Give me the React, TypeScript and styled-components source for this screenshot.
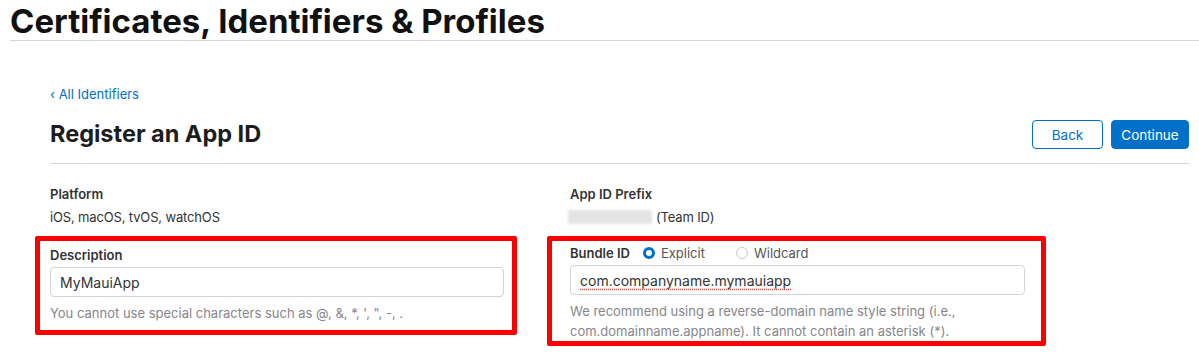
import React from 'react';
import styled, { createGlobalStyle } from 'styled-components';

const GlobalStyle = createGlobalStyle`
  body {
    margin: 0;
    background: #fff;
    font-family: Inter, "Noto Sans", "Liberation Sans", sans-serif;
    color: #1d1d1f;
  }
`;

const Page = styled.div`
  width: 1199px;
  height: 354px;
  overflow: hidden;
`;

const TopBar = styled.header`
  margin-left: 10px;
  padding-top: 2px;
  border-bottom: 1px solid #d6d6d6;
`;

const SiteTitle = styled.h1`
  margin: 0;
  font-size: 33px;
  line-height: 38px;
  font-weight: 700;
  color: #111;
`;

const Content = styled.main`
  padding: 44px 10px 0 50px;
`;

const BackLink = styled.a`
  display: block;
  font-size: 13px;
  line-height: 18px;
  color: #0070c9;
  text-decoration: none;
`;

const HeadRow = styled.div`
  display: flex;
  align-items: center;
  justify-content: space-between;
  margin-top: 15px;
  padding-bottom: 14px;
  border-bottom: 1px solid #d6d6d6;
`;

const PageTitle = styled.h2`
  margin: 0;
  font-size: 23.5px;
  line-height: 30px;
  font-weight: 700;
  color: #1d1d1f;
`;

const Actions = styled.div`
  display: flex;
  gap: 8px;
  margin-top: 2px;
`;

const Button = styled.button<{ $primary?: boolean }>`
  width: ${(p) => (p.$primary ? '78px' : '71px')};
  height: 29px;
  padding: 0;
  border-radius: 4px;
  font-family: inherit;
  font-size: 13.5px;
  border: 1px solid #0070c9;
  background: ${(p) => (p.$primary ? '#0070c9' : '#fff')};
  color: ${(p) => (p.$primary ? '#fff' : '#0070c9')};
`;

const Columns = styled.div`
  display: grid;
  grid-template-columns: 520px 1fr;
  margin-top: 21px;
`;

const Column = styled.section`
  display: flex;
  flex-direction: column;
`;

const Label = styled.div`
  font-size: 13px;
  line-height: 18px;
  font-weight: 600;
  color: #333;
  display: flex;
  align-items: center;
`;

const Value = styled.div`
  margin-top: 5px;
  font-size: 13px;
  line-height: 18px;
  letter-spacing: -0.15px;
  color: #333;
  display: flex;
  align-items: center;
`;

const Blurred = styled.span`
  display: inline-block;
  width: 84px;
  height: 14px;
  margin-left: -2px;
  margin-right: 4px;
  background: #e4e4e4;
  filter: blur(1.5px);
`;

const Highlight = styled.div<{ $width: number; $height: number; $inset: number }>`
  box-sizing: border-box;
  width: ${(p) => p.$width}px;
  height: ${(p) => p.$height}px;
  margin: 10px 0 0 ${(p) => -(p.$inset + 5)}px;
  padding: ${(p) => (p.$height > 100 ? '3px' : '5px')} 0 0 ${(p) => p.$inset}px;
  border: 5px solid #ff0000;
  border-radius: 2px;
`;

const InputBox = styled.div<{ $width: number }>`
  box-sizing: border-box;
  width: ${(p) => p.$width}px;
  height: 30px;
  margin-top: 3px;
  padding: 0 9px;
  display: flex;
  align-items: center;
  border: 1px solid #d2d2d7;
  border-radius: 4px;
  font-size: 14px;
  color: #333;
`;

const Misspelled = styled.span`
  text-decoration: underline dotted #e0453a;
  text-underline-offset: 3px;
`;

const Help = styled.p`
  margin: 6px 0 0;
  font-size: 13px;
  line-height: 20px;
  color: #86868b;
`;

const RadioGroup = styled.label`
  display: inline-flex;
  align-items: center;
  gap: 6px;
  margin-left: 13px;
  margin-right: 18px;
  font-weight: 400;
  color: #555;
`;

const Radio = styled.span<{ $checked?: boolean }>`
  box-sizing: border-box;
  width: 12px;
  height: 12px;
  border-radius: 50%;
  border: ${(p) => (p.$checked ? '3.5px solid #0070c9' : '1px solid #c7c7c7')};
  background: #fff;
`;

export default function App() {
  return (
    <Page>
      <GlobalStyle />
      <TopBar>
        <SiteTitle>Certificates, Identifiers &amp; Profiles</SiteTitle>
      </TopBar>
      <Content>
        <BackLink href="#">‹ All Identifiers</BackLink>
        <HeadRow>
          <PageTitle>Register an App ID</PageTitle>
          <Actions>
            <Button>Back</Button>
            <Button $primary>Continue</Button>
          </Actions>
        </HeadRow>
        <Columns>
          <Column>
            <Label>Platform</Label>
            <Value>iOS, macOS, tvOS, watchOS</Value>
            <Highlight $width={482} $height={99} $inset={10}>
              <Label>Description</Label>
              <InputBox $width={454}>MyMauiApp</InputBox>
              <Help>You cannot use special characters such as @, &amp;, *, ', ", -, .</Help>
            </Highlight>
          </Column>
          <Column>
            <Label>App ID Prefix</Label>
            <Value>
              <Blurred />
              (Team ID)
            </Value>
            <Highlight $width={499} $height={110} $inset={18}>
              <Label>
                Bundle ID
                <RadioGroup>
                  <Radio $checked />
                  Explicit
                </RadioGroup>
                <RadioGroup>
                  <Radio />
                  Wildcard
                </RadioGroup>
              </Label>
              <InputBox $width={455}>
                <Misspelled>com.companyname.mymauiapp</Misspelled>
              </InputBox>
              <Help>
                We recommend using a reverse-domain name style string (i.e.,
                <br />
                com.domainname.appname). It cannot contain an asterisk (*).
              </Help>
            </Highlight>
          </Column>
        </Columns>
      </Content>
    </Page>
  );
}
